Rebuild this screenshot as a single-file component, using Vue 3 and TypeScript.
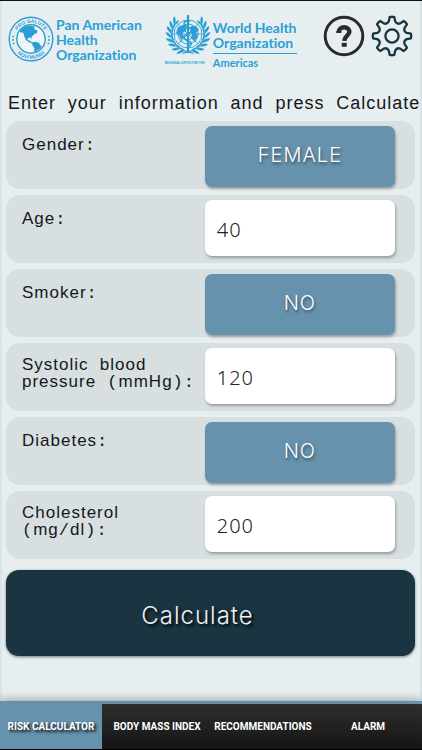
<script setup lang="ts">
import { reactive, ref } from 'vue'

interface Field {
  id: string
  label: string
  kind: 'toggle' | 'number'
  value: string
  options?: string[]
}

const fields = reactive<Field[]>([
  { id: 'gender', label: 'Gender:', kind: 'toggle', value: 'FEMALE', options: ['FEMALE', 'MALE'] },
  { id: 'age', label: 'Age:', kind: 'number', value: '40' },
  { id: 'smoker', label: 'Smoker:', kind: 'toggle', value: 'NO', options: ['NO', 'YES'] },
  { id: 'pressure', label: 'Systolic blood pressure (mmHg):', kind: 'number', value: '120' },
  { id: 'diabetes', label: 'Diabetes:', kind: 'toggle', value: 'NO', options: ['NO', 'YES'] },
  { id: 'cholesterol', label: 'Cholesterol (mg/dl):', kind: 'number', value: '200' },
])

const intro = 'Enter your information and press Calculate'
const tabs = ['RISK CALCULATOR', 'BODY MASS INDEX', 'RECOMMENDATIONS', 'ALARM']
const activeTab = ref(tabs[0])

function toggle(field: Field) {
  const options = field.options ?? []
  field.value = options[(options.indexOf(field.value) + 1) % options.length]
}

// Letters are set in the sans face; spaces and punctuation in the monospaced one
function runs(text: string): { text: string; mono: boolean }[] {
  return (text.match(/[A-Za-z]+|[^A-Za-z]+/g) ?? []).map((part) => ({
    text: part,
    mono: !/[A-Za-z]/.test(part),
  }))
}

function polar(radius: number, degrees: number): string {
  const a = (degrees * Math.PI) / 180
  return `${(radius * Math.cos(a)).toFixed(2)} ${(radius * Math.sin(a)).toFixed(2)}`
}

// Eight tapered teeth joined by shallow round valleys
const gearPath =
  Array.from({ length: 8 }, (_, i) => {
    const c = i * 45 - 90
    return `${i ? 'L' : 'M'}${polar(15, c - 12)} L${polar(19, c - 7)} Q${polar(19.6, c)} ${polar(19, c + 7)} L${polar(15, c + 12)} Q${polar(12.4, c + 22.5)} ${polar(15, c + 33)}`
  }).join(' ') + 'Z'

// Leaf positions of the right half of the laurel wreath
const leaves = Array.from({ length: 8 }, (_, i) => 72 - i * 16)
</script>

<template>
  <div class="page">
    <header class="header">
      <div class="paho">
        <svg class="seal" viewBox="-23 -23 46 46" aria-hidden="true">
          <defs>
            <path id="arc-top" d="M-16.2 0A16.2 16.2 0 0 1 16.2 0" />
            <path id="arc-bottom" d="M-19.8 0A19.8 19.8 0 0 0 19.8 0" />
          </defs>
          <circle r="21.8" fill="none" stroke="#2a9fd6" stroke-width="1.4" />
          <circle r="14.2" fill="#f0f6f8" stroke="#2a9fd6" stroke-width="1.4" />
          <text class="ring-text"><textPath href="#arc-top" startOffset="50%" text-anchor="middle">PRO SALUTE</textPath></text>
          <text class="ring-text"><textPath href="#arc-bottom" startOffset="50%" text-anchor="middle">NOVI MUNDI</textPath></text>
          <g fill="#2a9fd6">
            <circle cx="-18" cy="1" r="0.9" /><circle cx="-17.4" cy="4.4" r="0.9" /><circle cx="-18" cy="-2.4" r="0.9" />
            <circle cx="18" cy="1" r="0.9" /><circle cx="17.4" cy="4.4" r="0.9" /><circle cx="18" cy="-2.4" r="0.9" />
            <path d="M-10.5-9.5L-6-12.6L0-13.3L4-12.2L3-10L6.5-8.5L6-6L3.5-5L1.5-3L.4-1.8L.8 0L-1-1.6L-3-1L-3.5 1.2L-1.2 1.4L.5 3.2L2 3.8L1 4.6L-2 3.2L-5.2 1L-6.6-2.5L-7.6-6L-11-7Z" />
            <path d="M1.6 3.2L4.8 2.7L8.2 4L8.8 5.7L10.6 7L9.4 9.5L6.6 11.2L4.5 12.8L2.7 12.8L3.6 9.2L1.6 6.5L.8 4.6Z" />
          </g>
        </svg>
        <div class="logo-text paho-name">Pan American<br>Health<br>Organization</div>
      </div>

      <div class="who">
        <svg class="emblem" viewBox="-23 -20 46 40" aria-hidden="true">
          <g fill="none" stroke="#2a9fd6">
            <g stroke-width="0.9">
              <circle r="14" /><circle r="10" /><circle r="5.6" />
              <path d="M-14 0H14M-10-10L10 10M-10 10L10-10" />
            </g>
            <path d="M0-19V19" stroke-width="2.2" />
            <path d="M2-13C-5-14-6-9 0-7S6-2 0 0S-5 5 0 7S4 11 0 13" stroke-width="1.6" />
          </g>
          <g fill="#2a9fd6">
            <path d="M-10-7L-5-9L-1.5-7L-2-3L-6-1L-4 3L-7 6L-9 1L-12-1Z" />
            <path d="M3-8L8-8L11-4L8-1L10 3L6 7L3 4L4 0L2-3Z" />
            <g v-for="side in [1, -1]" :key="side" :transform="`scale(${side} 1)`">
              <g v-for="a in leaves" :key="a" :transform="`rotate(${a})`">
                <path d="M16.5 2Q22-1 22-5Q16.5-3 16.5 2Z" />
                <path d="M16.2 2Q14-1.5 15.8-5Q18-2 16.2 2Z" />
              </g>
            </g>
            <path d="M-7 16Q-1 16 6 19L5 20Q-2 17-8 17ZM7 16Q1 16-6 19L-5 20Q2 17 8 17Z" />
          </g>
        </svg>
        <div class="logo-text who-name">World Health<br>Organization</div>
        <div class="office">REGIONAL OFFICE FOR THE</div>
        <div class="americas">Americas</div>
      </div>

      <div class="actions">
        <button class="icon" type="button" aria-label="Help">
          <svg viewBox="-21 -21 42 42" fill="none" stroke="#2b2b2d">
            <circle r="18.8" stroke-width="3" />
            <path d="M-5.2-4C-5.2-10.4 5.4-10.2 5.4-4.2C5.4-.6.6-.7.3 4.8" stroke-width="4.4" />
            <path d="M-7.8-4H-2.6" stroke-width="2" />
            <path d="M-2.3 8.8H2.7" stroke-width="4" />
          </svg>
        </button>
        <button class="icon" type="button" aria-label="Settings">
          <svg viewBox="-21 -21 42 42" fill="none" stroke="#1b3442" stroke-linejoin="round" stroke-width="2.3">
            <path :d="gearPath" />
            <circle r="6.6" />
          </svg>
        </button>
      </div>
    </header>

    <main class="content">
      <p class="intro"><span v-for="(run, i) in runs(intro)" :key="i" :class="{ mono: run.mono }">{{ run.text }}</span></p>
      <form class="form" @submit.prevent>
        <div v-for="field in fields" :key="field.id" class="row">
          <label class="label" :for="field.id"><span v-for="(run, i) in runs(field.label)" :key="i" :class="{ mono: run.mono }">{{ run.text }}</span></label>
          <button v-if="field.kind === 'toggle'" :id="field.id" class="toggle" type="button" @click="toggle(field)">{{ field.value }}</button>
          <input v-else :id="field.id" v-model="field.value" class="input" type="text" inputmode="numeric">
        </div>
        <button class="calculate" type="submit">Calculate</button>
      </form>
    </main>

    <nav class="tabs">
      <a v-for="tab in tabs" :key="tab" href="#" class="tab" :class="{ active: tab === activeTab }" @click.prevent="activeTab = tab">{{ tab }}</a>
    </nav>
  </div>
</template>

<style>
body {
  margin: 0;
  background: #e6eef0;
}
</style>

<style scoped>
.page {
  box-sizing: border-box;
  min-height: 100vh;
  display: flex;
  flex-direction: column;
  border-top: 1px solid #111;
  border-bottom: 1px solid #000;
  background: linear-gradient(90deg, #d6dfe2 0, #e6eef0 3px, #e6eef0 calc(100% - 3px), #d3dee2 100%);
  font-family: "Liberation Sans", sans-serif;
  color: #151718;
  overflow: hidden;
}

.mono {
  font-family: "Liberation Mono", monospace;
  line-height: 1px;
}

.header {
  display: flex;
  align-items: flex-start;
  padding: 13px 9px 0 8px;
}

.paho {
  display: flex;
  gap: 2px;
  margin-right: 23px;
}

.seal {
  width: 46px;
  height: 46px;
  margin-top: 2px;
}

.ring-text {
  font-size: 5px;
  font-weight: 700;
  fill: #2a9fd6;
}

.logo-text {
  font: 700 14px/15px Lato, "Open Sans", sans-serif;
  font-variant-ligatures: none;
  color: #2a9fd6;
  white-space: nowrap;
}

.paho-name {
  padding-top: 3px;
}

.who {
  display: grid;
  grid-template-columns: 46px auto;
  column-gap: 2px;
}

.emblem {
  width: 46px;
  height: 40px;
}

.who-name {
  padding: 6px 0 2px;
  border-bottom: 1px solid #2a9fd6;
}

.office {
  align-self: center;
  font: 700 3px/10px "Open Sans", sans-serif;
  color: #2a9fd6;
  white-space: nowrap;
}

.americas {
  font: 700 11px/18px Lato, "Open Sans", sans-serif;
  color: #2a9fd6;
}

.actions {
  display: flex;
  gap: 6px;
  margin-left: auto;
  margin-top: 1px;
}

.icon {
  width: 42px;
  height: 42px;
  padding: 0;
  border: 0;
  background: none;
}

.icon svg {
  display: block;
}

.content {
  padding: 0 7px 0 6px;
}

.intro {
  margin: 19px -7px 6px 2px;
  font-size: 18px;
  line-height: 24px;
  letter-spacing: 1px;
  white-space: nowrap;
}

.form {
  display: flex;
  flex-direction: column;
  gap: 6px;
}

.row {
  box-sizing: border-box;
  min-height: 68px;
  display: grid;
  grid-template-columns: 49fr 51fr;
  align-items: start;
  padding: 5px 20px 0 16px;
  border-radius: 14px;
  background: #d8dfe1;
}

.label {
  min-height: 21px;
  display: block;
  align-content: center;
  padding-top: 8px;
  font-size: 17px;
  line-height: 17px;
  letter-spacing: 1px;
}

.toggle,
.input {
  box-sizing: border-box;
  width: 100%;
  border: 0;
  border-radius: 7px;
  box-shadow: 1px 2px 3px rgba(0, 0, 0, 0.3);
  letter-spacing: 1px;
}

.toggle {
  height: 61px;
  padding: 0 0 3px;
  background: #6792ad;
  color: #fff;
  font: 300 20px/24px Inter, sans-serif;
  text-shadow: 1px 2px 3px rgba(0, 0, 0, 0.5);
}

.input {
  height: 56px;
  padding: 3px 12px 0;
  background: #fff;
  color: #222;
  font: 300 20px/24px "Noto Sans", sans-serif;
}

.calculate {
  height: 86px;
  margin-top: 5px;
  padding: 6px 26px 0 0;
  border: 0;
  border-radius: 13px;
  background: #1a3441;
  box-shadow: 0 1px 3px rgba(0, 0, 0, 0.5);
  color: #eef1f2;
  font: 300 24px/30px Inter, sans-serif;
  letter-spacing: 1px;
  text-shadow: 2px 2px 3px #000;
}

.tabs {
  display: grid;
  grid-template-columns: 102fr 110fr 102fr 108fr;
  margin-top: auto;
  border-top: 3px solid #6792ad;
  background: linear-gradient(#2e2e2e, #151515);
  box-shadow: 0 -1px 9px rgba(0, 0, 0, 0.35);
}

.tab {
  height: 45px;
  color: #fff;
  font: 700 10px/46px Roboto, sans-serif;
  text-align: center;
  text-decoration: none;
  white-space: nowrap;
}

.active {
  background: #6792ad;
  text-shadow: 2px 2px 3px #000;
}
</style>
